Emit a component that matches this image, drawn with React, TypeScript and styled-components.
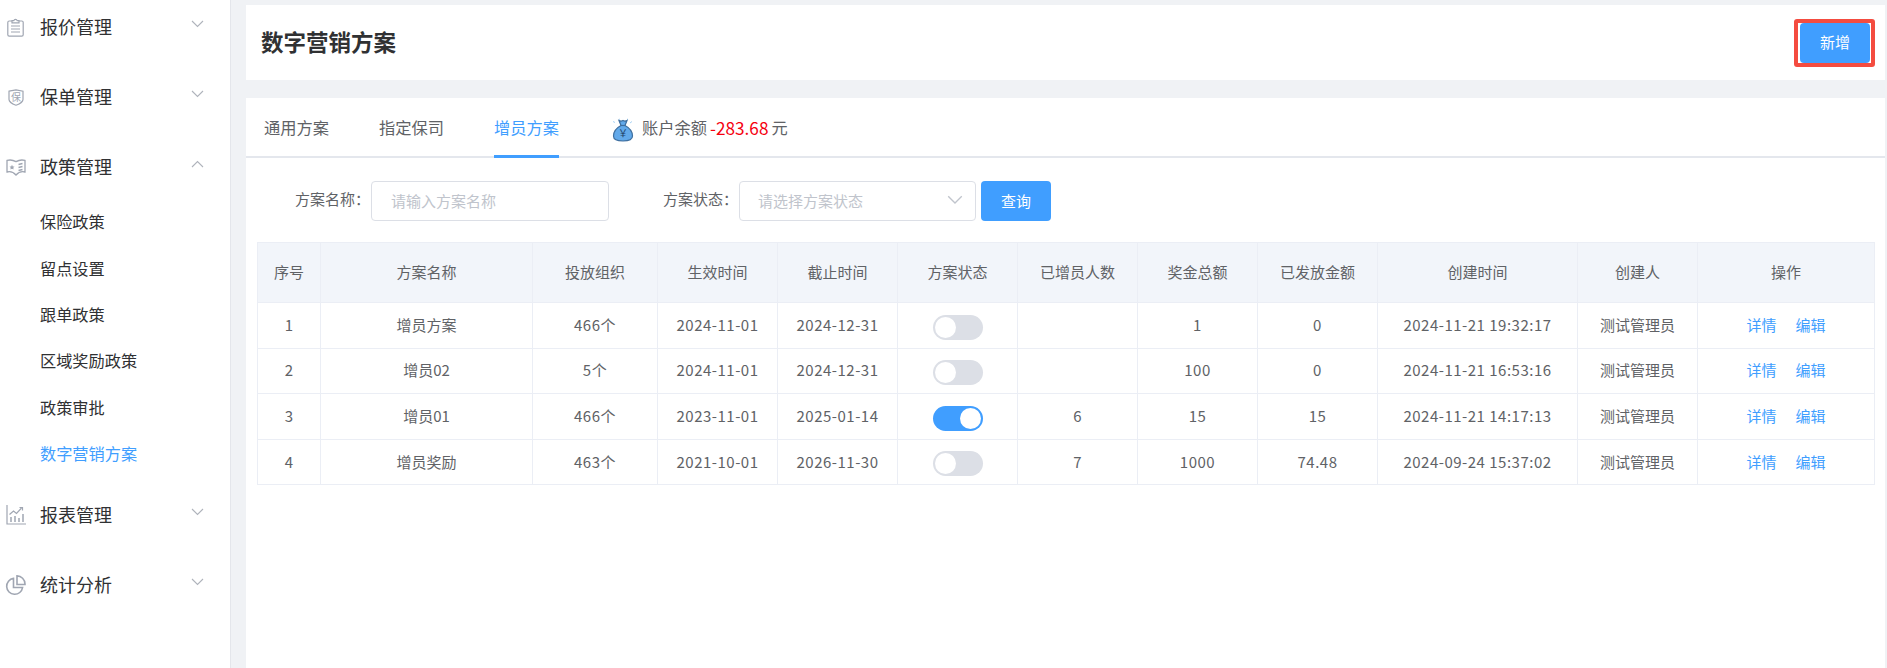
import * as React from 'react';
import styled, { createGlobalStyle } from 'styled-components';

const FONT = '"Noto Sans CJK SC", "Noto Sans", sans-serif';

const GlobalStyle = createGlobalStyle`
  html, body {
    margin: 0;
    padding: 0;
    height: 100%;
    overflow: hidden;
    background: #f0f2f5;
    font-family: ${FONT};
  }
  #root {
    height: 100%;
  }
  * {
    box-sizing: border-box;
  }
`;

const Page = styled.div`
  display: flex;
  height: 668px;
  width: 1887px;
`;

const Sidebar = styled.aside`
  flex: 0 0 231px;
  background: #fff;
  border-right: 1px solid #e4e6eb;
  overflow: hidden;
`;

const MenuGroup = styled.div`
  margin-bottom: 16px;
`;

const MenuTitle = styled.div`
  display: flex;
  align-items: center;
  height: 54px;
  padding-left: 5px;
  font-size: 18px;
  color: #303133;
`;

const IconSlot = styled.span`
  display: flex;
  justify-content: center;
  align-items: center;
  width: 21px;
  height: 21px;
  margin-right: 14px;
  color: #a0a6b2;
`;

const MenuLabel = styled.span`
  flex: 1;
  padding-bottom: 2px;
`;

const ChevronSlot = styled.span`
  display: flex;
  margin-right: 26px;
  margin-top: -7px;
  color: #afb3bb;
`;

const SubList = styled.div`
  margin: 4px 0 -4px;
`;

const SubItem = styled.div<{ $active?: boolean }>`
  display: flex;
  align-items: center;
  height: 46.4px;
  padding-left: 40px;
  font-size: 16.2px;
  color: ${(p) => (p.$active ? '#409eff' : '#303133')};
`;

const Main = styled.main`
  flex: 1;
  display: flex;
  flex-direction: column;
  gap: 18px;
  padding: 5px 2px 0 15px;
  min-width: 0;
`;

const HeaderCard = styled.header`
  display: flex;
  align-items: center;
  justify-content: space-between;
  flex: 0 0 75px;
  padding: 0 15px;
  background: #fff;
`;

const Title = styled.h1`
  margin: 0 0 4px;
  font-size: 22.5px;
  font-weight: 700;
  color: #303133;
`;

const Button = styled.button`
  width: 70px;
  height: 40px;
  padding: 0 0 2px;
  border: 0;
  border-radius: 4px;
  background: #409eff;
  color: #fff;
  font-family: ${FONT};
  font-size: 15px;
`;

const Highlighted = styled.div`
  position: relative;
  display: flex;

  &::after {
    content: '';
    position: absolute;
    inset: -4px -5px -4px -6px;
    border: 4px solid #f44c40;
    border-radius: 3px;
  }
`;

const ContentCard = styled.section`
  flex: 1;
  background: #fff;
`;

const Tabs = styled.nav`
  display: flex;
  height: 60px;
  padding-left: 18px;
  border-bottom: 2px solid #e4e7ed;
`;

const Tab = styled.div<{ $active?: boolean }>`
  display: flex;
  align-items: center;
  height: 60px;
  margin-right: 50px;
  padding-top: 1px;
  font-size: 16.25px;
  color: ${(p) => (p.$active ? '#409eff' : '#606266')};
  border-bottom: 3px solid ${(p) => (p.$active ? '#409eff' : 'transparent')};
`;

const Balance = styled.div`
  display: flex;
  align-items: center;
  height: 58px;
  margin-left: 2px;
  font-size: 16.25px;
  color: #606266;
`;

const BalanceIcon = styled.span`
  display: flex;
  margin: 6px 7px 0 0;
`;

const Amount = styled.span`
  margin: 0 3px;
  font-size: 17.2px;
  color: #f5000f;
`;

const FilterRow = styled.form`
  display: flex;
  align-items: center;
  height: 40px;
  margin: 23px 0 21px;
  padding-left: 49px;
`;

const FieldLabel = styled.label<{ $gap?: boolean }>`
  width: 76px;
  margin-left: ${(p) => (p.$gap ? '54px' : '0')};
  padding-bottom: 6px;
  font-size: 15px;
  color: #606266;
  white-space: nowrap;
`;

const TextInput = styled.input`
  width: 238px;
  height: 40px;
  padding: 0 0 2px 19px;
  border: 1px solid #dcdfe6;
  border-radius: 4px;
  outline: none;
  font-family: ${FONT};
  font-size: 15px;

  &::placeholder {
    color: #c0c4cc;
    opacity: 1;
  }
`;

const SelectBox = styled.div`
  display: flex;
  align-items: center;
  justify-content: space-between;
  width: 237px;
  height: 40px;
  margin-right: 5px;
  padding: 0 12px 2px 18px;
  border: 1px solid #dcdfe6;
  border-radius: 4px;
  font-size: 15px;
  color: #c0c4cc;
`;

const TableWrap = styled.div`
  padding: 0 11px;
`;

const Table = styled.table`
  width: 100%;
  border-collapse: collapse;
  table-layout: fixed;
  font-size: 15px;
  color: #606266;
`;

const Th = styled.th`
  height: 60px;
  padding: 0 0 2px;
  border: 1px solid #ebeef5;
  background: #f2f5fa;
  font-weight: 400;
  text-align: center;
  white-space: nowrap;
`;

const Td = styled.td`
  height: 45.6px;
  padding: 0 0 2px;
  border: 1px solid #ebeef5;
  text-align: center;
  white-space: nowrap;
`;

const NumTd = styled(Td)`
  letter-spacing: 0.5px;
`;

const SwitchTd = styled(Td)`
  padding: 3px 0 0;
`;

const SwitchTrack = styled.span<{ $on?: boolean }>`
  display: inline-flex;
  justify-content: ${(p) => (p.$on ? 'flex-end' : 'flex-start')};
  align-items: center;
  vertical-align: middle;
  width: 50px;
  height: 25px;
  padding: 2px;
  border-radius: 13px;
  background: ${(p) => (p.$on ? '#409eff' : '#dcdfe6')};
`;

const SwitchKnob = styled.span`
  width: 21px;
  height: 21px;
  border-radius: 50%;
  background: #fff;
`;

const ActionLink = styled.a`
  color: #409eff;
  font-size: 15px;

  & + & {
    margin-left: 19px;
  }
`;

const ClipboardIcon = () => (
  <svg width="17" height="19" viewBox="0 0 17 19" fill="none" stroke="currentColor" strokeWidth="1.2">
    <path d="M5 3H2.2A1.4 1.4 0 0 0 .8 4.4v12.4a1.4 1.4 0 0 0 1.4 1.4h12.6a1.4 1.4 0 0 0 1.4-1.4V4.4A1.4 1.4 0 0 0 14.8 3H12" />
    <path d="M5 4.8V2.6h1.8a1.8 1.8 0 0 1 3.4 0H12v2.2z" />
    <path d="M4 8h9M4 11h9M4 14h9" />
  </svg>
);

const ShieldIcon = () => (
  <svg width="16" height="17" viewBox="0 0 16 17" fill="none" stroke="currentColor" strokeWidth="1.2">
    <path d="M1 2.2 8 .8l7 1.4v8.2c0 2-3.6 4.6-7 5.8-3.4-1.2-7-3.8-7-5.8z" />
    <text x="8" y="11.8" textAnchor="middle" fontSize="10" fill="currentColor" stroke="none" fontFamily={FONT}>
      保
    </text>
  </svg>
);

const BookIcon = () => (
  <svg width="20" height="18" viewBox="0 0 20 18" fill="none" stroke="currentColor" strokeWidth="1.3">
    <path d="M1 2.4c3-.8 6-.5 9 1.2 3-1.7 6-2 9-1.2V14c-3-.8-6-.4-9 3-3-3.4-6-3.8-9-3z" />
    <path d="M12.5 6.5 16.5 5.500M12.5 9.500l4-1M12.500 12.500l4-1" />
    <path d="m6 6.800.8 1.600 1.700.2-1.200 1.200.3 1.700-1.600-.8-1.600.8.300-1.700-1.200-1.200 1.700-.2z" fill="currentColor" stroke="none" />
  </svg>
);

const ChartIcon = () => (
  <svg width="20" height="20" viewBox="0 0 20 20" fill="none" stroke="currentColor" strokeWidth="1.2">
    <path d="M1 0v19h19" />
    <path d="m3.500 9.500 4-3.500 3 2.500 5-5.500" />
    <path d="M13.500 2.500h3v3" />
    <path d="M5 17v-5M9 17v-6M13 17v-4M17 17V9" strokeWidth="1.500" />
  </svg>
);

const PieIcon = () => (
  <svg width="21" height="21" viewBox="0 0 21 21" fill="none" stroke="currentColor" strokeWidth="1.600">
    <path d="M8.500 3.400a8 8 0 1 0 9.100 9.100H8.500z" />
    <path d="M12 .9a8.200 8.200 0 0 1 8 8V9.500h-8z" />
  </svg>
);

const MoneyBagIcon = () => (
  <svg width="24" height="24" viewBox="0 0 24 24">
    <path d="M2 3.500 4 4.500M21 3.500 19 5M8 1l1 .5M17 1l-1 .5" stroke="#a9d3f5" strokeWidth="1" fill="none" />
    <path
      d="M8 2.500c1.500.8 2.700.8 4 0 1.300.8 2.500.8 4 0l-2 5c3.800 2 7.500 6 7.500 10.500 0 3.500-3 5-9.500 5s-9.500-1.500-9.500-5C2.500 13.500 6.200 9.500 10 7.500z"
      fill="#62a9ea"
      stroke="#3f6f9f"
      strokeWidth="1.200"
    />
    <path d="M9.500 7.500h5" stroke="#3f6f9f" strokeWidth="1.200" />
    <text x="12" y="19" textAnchor="middle" fontSize="10" fill="#24476b" fontFamily={FONT}>
      ￥
    </text>
  </svg>
);

const Chevron = ({ up, size = 13 }: { up?: boolean; size?: number }) => (
  <svg width={size} height={Math.round(size * 0.6)} viewBox="0 0 13 8" fill="none" stroke="currentColor" strokeWidth="1.100">
    <path d={up ? 'M1 7l5.500-5.500L12 7' : 'M1 1l5.500 5.500L12 1'} />
  </svg>
);

const columns = [
  { title: '序号', width: 63 },
  { title: '方案名称', width: 212 },
  { title: '投放组织', width: 125 },
  { title: '生效时间', width: 120 },
  { title: '截止时间', width: 120 },
  { title: '方案状态', width: 120 },
  { title: '已增员人数', width: 120 },
  { title: '奖金总额', width: 120 },
  { title: '已发放金额', width: 120 },
  { title: '创建时间', width: 200 },
  { title: '创建人', width: 120 },
  { title: '操作', width: 177 },
];

const rows = [
  { no: 1, name: '增员方案', org: '466个', start: '2024-11-01', end: '2024-12-31', on: false, people: '', total: '1', paid: '0', created: '2024-11-21 19:32:17' },
  { no: 2, name: '增员02', org: '5个', start: '2024-11-01', end: '2024-12-31', on: false, people: '', total: '100', paid: '0', created: '2024-11-21 16:53:16' },
  { no: 3, name: '增员01', org: '466个', start: '2023-11-01', end: '2025-01-14', on: true, people: '6', total: '15', paid: '15', created: '2024-11-21 14:17:13' },
  { no: 4, name: '增员奖励', org: '463个', start: '2021-10-01', end: '2026-11-30', on: false, people: '7', total: '1000', paid: '74.48', created: '2024-09-24 15:37:02' },
];

const subMenu = ['保险政策', '留点设置', '跟单政策', '区域奖励政策', '政策审批', '数字营销方案'];

export default function App() {
  return (
    <Page>
      <GlobalStyle />
      <Sidebar>
        <MenuGroup>
          <MenuTitle>
            <IconSlot><ClipboardIcon /></IconSlot>
            <MenuLabel>报价管理</MenuLabel>
            <ChevronSlot><Chevron /></ChevronSlot>
          </MenuTitle>
        </MenuGroup>
        <MenuGroup>
          <MenuTitle>
            <IconSlot><ShieldIcon /></IconSlot>
            <MenuLabel>保单管理</MenuLabel>
            <ChevronSlot><Chevron /></ChevronSlot>
          </MenuTitle>
        </MenuGroup>
        <MenuGroup>
          <MenuTitle>
            <IconSlot><BookIcon /></IconSlot>
            <MenuLabel>政策管理</MenuLabel>
            <ChevronSlot><Chevron up /></ChevronSlot>
          </MenuTitle>
          <SubList>
            {subMenu.map((item, i) => (
              <SubItem key={item} $active={i === subMenu.length - 1}>{item}</SubItem>
            ))}
          </SubList>
        </MenuGroup>
        <MenuGroup>
          <MenuTitle>
            <IconSlot><ChartIcon /></IconSlot>
            <MenuLabel>报表管理</MenuLabel>
            <ChevronSlot><Chevron /></ChevronSlot>
          </MenuTitle>
        </MenuGroup>
        <MenuGroup>
          <MenuTitle>
            <IconSlot><PieIcon /></IconSlot>
            <MenuLabel>统计分析</MenuLabel>
            <ChevronSlot><Chevron /></ChevronSlot>
          </MenuTitle>
        </MenuGroup>
      </Sidebar>
      <Main>
        <HeaderCard>
          <Title>数字营销方案</Title>
          <Highlighted>
            <Button type="button">新增</Button>
          </Highlighted>
        </HeaderCard>
        <ContentCard>
          <Tabs>
            <Tab>通用方案</Tab>
            <Tab>指定保司</Tab>
            <Tab $active>增员方案</Tab>
            <Balance>
              <BalanceIcon><MoneyBagIcon /></BalanceIcon>
              账户余额
              <Amount>-283.68</Amount>
              元
            </Balance>
          </Tabs>
          <FilterRow>
            <FieldLabel>方案名称：</FieldLabel>
            <TextInput placeholder="请输入方案名称" />
            <FieldLabel $gap>方案状态：</FieldLabel>
            <SelectBox>
              请选择方案状态
              <Chevron size={16} />
            </SelectBox>
            <Button type="button">查询</Button>
          </FilterRow>
          <TableWrap>
            <Table>
              <colgroup>
                {columns.map((c) => (
                  <col key={c.title} style={{ width: c.width }} />
                ))}
              </colgroup>
              <thead>
                <tr>
                  {columns.map((c) => (
                    <Th key={c.title}>{c.title}</Th>
                  ))}
                </tr>
              </thead>
              <tbody>
                {rows.map((r) => (
                  <tr key={r.no}>
                    <Td>{r.no}</Td>
                    <Td>{r.name}</Td>
                    <NumTd>{r.org}</NumTd>
                    <NumTd>{r.start}</NumTd>
                    <NumTd>{r.end}</NumTd>
                    <SwitchTd>
                      <SwitchTrack $on={r.on}><SwitchKnob /></SwitchTrack>
                    </SwitchTd>
                    <Td>{r.people}</Td>
                    <NumTd>{r.total}</NumTd>
                    <NumTd>{r.paid}</NumTd>
                    <NumTd>{r.created}</NumTd>
                    <Td>测试管理员</Td>
                    <Td>
                      <ActionLink>详情</ActionLink>
                      <ActionLink>编辑</ActionLink>
                    </Td>
                  </tr>
                ))}
              </tbody>
            </Table>
          </TableWrap>
        </ContentCard>
      </Main>
    </Page>
  );
}
